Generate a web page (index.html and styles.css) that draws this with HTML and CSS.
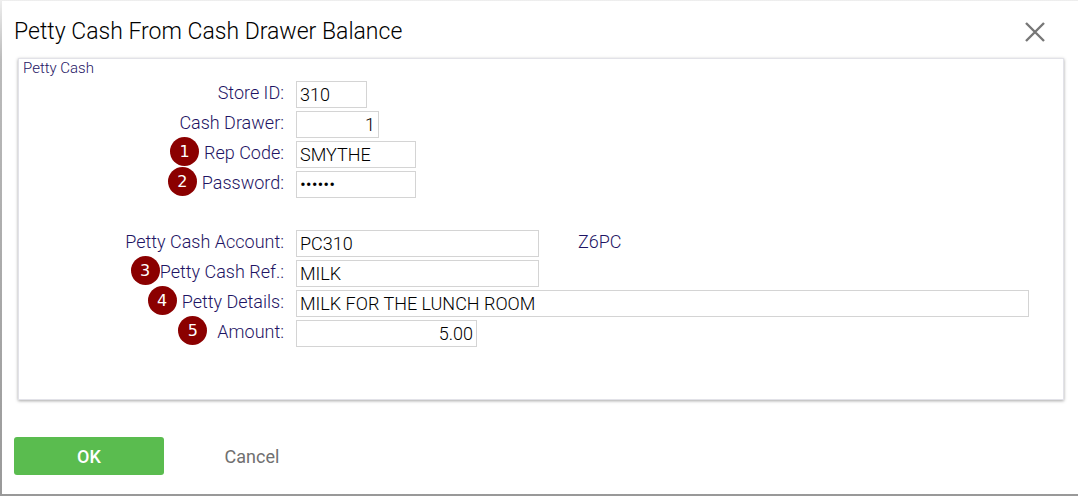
FILE: index.html
```
<!DOCTYPE html>
<html lang="en">
<head>
  <meta charset="UTF-8">
  <title>Petty Cash From Cash Drawer Balance</title>
  <link rel="stylesheet" href="styles.css">
</head>
<body>
  <form class="dialog" role="dialog" aria-labelledby="dialogTitle">
    <div class="header">
      <h1 class="title" id="dialogTitle">Petty Cash From Cash Drawer Balance</h1>
      <button type="button" class="close" aria-label="Close">
        <svg width="20" height="20" viewBox="0 0 20 20"><path d="M1 1L19 19M19 1L1 19" stroke="#777" stroke-width="2.4" fill="none"/></svg>
      </button>
    </div>

    <div class="panel">
      <h2 class="panel-title">Petty Cash</h2>
      <div class="row">
        <div class="label"><label for="storeId">Store ID:</label></div>
        <input type="text" class="field field-store" id="storeId" value="310">
      </div>
      <div class="row">
        <div class="label"><label for="cashDrawer">Cash Drawer:</label></div>
        <input type="text" class="field field-drawer number" id="cashDrawer" value="1">
      </div>
      <div class="row">
        <div class="label"><span class="badge">1</span><label for="repCode">Rep Code:</label></div>
        <input type="text" class="field field-rep" id="repCode" value="SMYTHE">
      </div>
      <div class="row">
        <div class="label"><span class="badge">2</span><label for="password">Password:</label></div>
        <input type="password" class="field field-rep" id="password" value="secret">
      </div>

      <div class="row row-account">
        <div class="label"><label for="account">Petty Cash Account:</label></div>
        <input type="text" class="field field-account" id="account" value="PC310">
        <span class="account-name">Z6PC</span>
      </div>
      <div class="row">
        <div class="label label-tight"><span class="badge">3</span><label for="ref">Petty Cash Ref.:</label></div>
        <input type="text" class="field field-account" id="ref" value="MILK">
      </div>
      <div class="row">
        <div class="label"><span class="badge">4</span><label for="details">Petty Details:</label></div>
        <input type="text" class="field field-details" id="details" value="MILK FOR THE LUNCH ROOM">
      </div>
      <div class="row">
        <div class="label label-wide"><span class="badge">5</span><label for="amount">Amount:</label></div>
        <input type="text" class="field field-amount number" id="amount" value="5.00">
      </div>
    </div>

    <div class="actions">
      <button type="submit" class="btn btn-ok">OK</button>
      <button type="button" class="btn btn-cancel">Cancel</button>
    </div>
  </form>
</body>
</html>
```
FILE: styles.css
```
* {
  box-sizing: border-box;
}

body {
  font-family: Roboto, "Liberation Sans", sans-serif;
  font-size: 18px;
  font-weight: 300;
  margin: 0;
  padding: 1px 0 2px 2px;
  min-height: 100vh;
  display: flex;
  background: linear-gradient(#eee, #bbb 60px, #999);
}

.dialog {
  flex: 1;
  display: flex;
  flex-direction: column;
  background-color: #fff;
}

.header {
  display: flex;
  justify-content: space-between;
  align-items: center;
  height: 57px;
  padding: 4px 33px 0 12px;
}

.title {
  margin: 0;
  font-size: 23px;
  font-weight: 300;
  color: #000;
}

.close {
  display: flex;
  padding: 0;
  border: 0;
  background: none;
}

.panel {
  flex: 1;
  margin: 0 14px 0 16px;
  padding: 0 34px 0 0;
  border: 1px solid #e2e2e8;
  box-shadow: 0 1px 3px rgba(0, 0, 0, 0.35);
  color: #1e1464;
}

.panel-title {
  margin: 0 0 4px 4px;
  font-size: 15px;
  font-weight: 300;
  line-height: 18px;
}

.row {
  display: flex;
  align-items: center;
  height: 27px;
  margin-bottom: 3px;
}

.row-account {
  margin-top: 32px;
}

.label {
  display: flex;
  justify-content: flex-end;
  align-items: center;
  gap: 5px;
  width: 265px;
  height: 27px;
  margin-right: 12px;
  padding-bottom: 5px;
}

.label-tight {
  gap: 0;
}

.label-wide {
  gap: 10px;
}

.badge {
  flex: none;
  width: 29px;
  height: 29px;
  margin-bottom: 2px;
  border-radius: 50%;
  background-color: #8b0000;
  color: #fff;
  font-family: "DejaVu Sans", sans-serif;
  font-size: 16px;
  font-weight: 400;
  line-height: 29px;
  text-align: center;
}

.field {
  height: 27px;
  padding: 0 3px;
  border: 1px solid #d4d4d4;
  background-color: #fff;
  color: #000;
  font-family: inherit;
  font-size: 18px;
  font-weight: 300;
}

.number {
  text-align: right;
}

.field-store {
  width: 71px;
}

.field-drawer {
  width: 83px;
}

.field-rep {
  width: 120px;
}

.field-account {
  width: 243px;
}

.field-details {
  flex: 1;
}

.field-amount {
  width: 181px;
}

.account-name {
  margin-left: 39px;
  padding-bottom: 5px;
}

.actions {
  display: flex;
  padding: 37px 12px 19px;
}

.btn {
  height: 38px;
  border: 0;
  border-radius: 3px;
  font-family: inherit;
  font-size: 18px;
}

.btn-ok {
  width: 150px;
  background-color: #5abc4f;
  color: #fff;
  font-weight: 500;
}

.btn-cancel {
  width: 176px;
  background: none;
  color: #707070;
}
```
